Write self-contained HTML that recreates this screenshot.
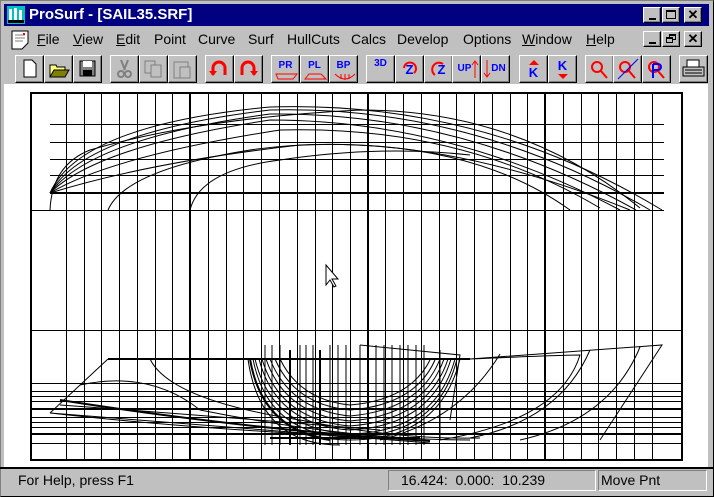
<!DOCTYPE html>
<html><head><meta charset="utf-8"><style>
*{margin:0;padding:0;box-sizing:border-box}
body{width:714px;height:497px;background:#c0c0c0;font-family:"Liberation Sans",sans-serif;overflow:hidden;position:relative}
.abs{position:absolute}
.title{left:4px;top:4px;width:705px;height:22px;background:#000080;color:#fff;font-weight:bold;font-size:15px;line-height:22px;padding-left:25px}
.btn{position:absolute;background:#c0c0c0;border-top:1px solid #fff;border-left:1px solid #fff;border-right:1px solid #000;border-bottom:1px solid #000;box-shadow:inset -1px -1px 0 #808080}
.menu{top:31px;font-size:14px;color:#000}
.tb{top:55px;width:29px;height:28px}
.tb span{position:absolute;left:0;right:0;top:4px;text-align:center;font-size:10px;font-weight:bold}
.status{font-size:14px}
.sunk{border-top:1px solid #808080;border-left:1px solid #808080;border-right:1px solid #fff;border-bottom:1px solid #fff}
</style></head><body>
<div class="abs" style="left:0;top:0;width:714px;height:497px;border:1px solid #808080;border-right-color:#000;border-bottom-color:#000"></div>
<div class="abs title">ProSurf - [SAIL35.SRF]</div>
<svg class="abs" style="left:7px;top:6px" width="18" height="18"><rect width="18" height="18" fill="#00c0c0"/><rect x="2" y="3" width="3" height="11" fill="#fff"/><rect x="7" y="2" width="3" height="12" fill="#fff"/><rect x="12" y="4" width="3" height="10" fill="#fff"/><rect x="1" y="14" width="16" height="3" fill="#000"/></svg>
<div class="btn" style="left:643px;top:7px;width:18px;height:16px"><div class="abs" style="left:5px;top:10px;width:7px;height:2px;background:#000"></div></div>
<div class="btn" style="left:662px;top:7px;width:18px;height:16px"><div class="abs" style="left:3px;top:2px;width:10px;height:9px;border:1px solid #000;border-top-width:2px"></div></div>
<div class="btn" style="left:684px;top:7px;width:18px;height:16px;font-size:13px;font-weight:bold;text-align:center;line-height:13px">✕</div>
<svg class="abs" style="left:10px;top:29px" width="22" height="22"><path d="M2 2h16v12l-6 6H2z" fill="#fff" stroke="#000"/><path d="M5 6h10M5 9h10M5 12h8" stroke="#808080"/><rect x="13" y="4" width="2" height="2" fill="red"/></svg>
<div class="abs menu" style="left:37px"><u>F</u>ile</div>
<div class="abs menu" style="left:73px"><u>V</u>iew</div>
<div class="abs menu" style="left:116px"><u>E</u>dit</div>
<div class="abs menu" style="left:154px">Point</div>
<div class="abs menu" style="left:198px">Curve</div>
<div class="abs menu" style="left:248px">Surf</div>
<div class="abs menu" style="left:287px">HullCuts</div>
<div class="abs menu" style="left:351px">Calcs</div>
<div class="abs menu" style="left:397px">Develop</div>
<div class="abs menu" style="left:463px">Options</div>
<div class="abs menu" style="left:522px"><u>W</u>indow</div>
<div class="abs menu" style="left:586px"><u>H</u>elp</div>
<div class="btn" style="left:643px;top:31px;width:18px;height:16px"><div class="abs" style="left:5px;top:10px;width:7px;height:2px;background:#000"></div></div>
<div class="btn" style="left:662px;top:31px;width:18px;height:16px"><div class="abs" style="left:6px;top:2px;width:7px;height:6px;border:1px solid #000;border-top-width:2px"></div><div class="abs" style="left:3px;top:5px;width:7px;height:6px;border:1px solid #000;border-top-width:2px;background:#c0c0c0"></div></div>
<div class="btn" style="left:684px;top:31px;width:18px;height:16px;font-size:13px;font-weight:bold;text-align:center;line-height:13px">✕</div>

<div class="btn tb" style="left:15px"><svg width="27" height="26"><path d="M8 4h8l4 4v13H8z" fill="#fff" stroke="#000"/></svg></div>
<div class="btn tb" style="left:44px"><svg width="27" height="26"><path d="M5 9h6l1 2h8v10H5z" fill="#ffff80" stroke="#000"/><path d="M5 21l4-7h15l-4 7z" fill="#808000" stroke="#000"/></svg></div>
<div class="btn tb" style="left:73px"><svg width="27" height="26"><rect x="6" y="5" width="15" height="15" fill="#808080" stroke="#000"/><rect x="9" y="5" width="9" height="6" fill="#fff"/><rect x="9" y="14" width="9" height="6" fill="#000"/></svg></div>
<div class="btn tb" style="left:110px"><svg width="27" height="26"><path d="M10 4l4 10M17 4l-4 10" stroke="#808080" stroke-width="2"/><circle cx="10" cy="18" r="3" fill="none" stroke="#808080" stroke-width="2"/><circle cx="17" cy="18" r="3" fill="none" stroke="#808080" stroke-width="2"/></svg></div>
<div class="btn tb" style="left:139px"><svg width="27" height="26"><rect x="5" y="5" width="10" height="12" fill="#c0c0c0" stroke="#808080"/><rect x="11" y="9" width="10" height="12" fill="#c0c0c0" stroke="#808080"/></svg></div>
<div class="btn tb" style="left:168px"><svg width="27" height="26"><rect x="5" y="6" width="14" height="16" fill="#c0c0c0" stroke="#808080"/><rect x="11" y="11" width="10" height="11" fill="#c0c0c0" stroke="#808080"/></svg></div>
<div class="btn tb" style="left:205px"><svg width="27" height="26"><path d="M7 19V12a6 6 0 0 1 12 0v7" fill="none" stroke="red" stroke-width="3"/><path d="M3 15l4 5 4-5z" fill="red"/></svg></div>
<div class="btn tb" style="left:234px"><svg width="27" height="26"><path d="M7 19V12a6 6 0 0 1 12 0v7" fill="none" stroke="red" stroke-width="3"/><path d="M15 15l4 5 4-5z" fill="red"/></svg></div>
<div class="btn tb" style="left:271px;color:#00f"><span>PR</span><svg class="abs" style="left:3px;top:17px" width="24" height="8"><path d="M1 1h21l-4 5H3z" fill="none" stroke="red"/></svg></div>
<div class="btn tb" style="left:300px;color:#00f"><span>PL</span><svg class="abs" style="left:3px;top:17px" width="24" height="8"><path d="M1 6l4-5h12l5 5z" fill="none" stroke="red"/></svg></div>
<div class="btn tb" style="left:329px;color:#00f"><span>BP</span><svg class="abs" style="left:3px;top:17px" width="24" height="8"><path d="M2 1q10 10 20 0M8 1v5M12 1v6M16 1v5" fill="none" stroke="red"/></svg></div>
<div class="btn tb" style="left:366px;color:#00f"><span style="top:2px">3D</span></div>
<div class="btn tb" style="left:395px;color:#00f"><span style="font-size:13px;top:6px">Z</span><svg class="abs" style="left:0;top:0" width="27" height="26"><path d="M8 12a6 6 0 1 1 10 5" fill="none" stroke="red" stroke-width="2"/></svg></div>
<div class="btn tb" style="left:424px;color:#00f"><span style="font-size:13px;top:6px;left:6px">Z</span><svg class="abs" style="left:0;top:0" width="27" height="26"><path d="M18 8a6 6 0 1 0 -8 11" fill="none" stroke="red" stroke-width="2"/></svg></div>
<div class="btn tb" style="left:452px;color:#00f"><span style="top:7px;left:-4px">UP</span><svg class="abs" style="left:0;top:0" width="27" height="26"><path d="M22 22V5M19 9l3-4 3 4" fill="none" stroke="red"/></svg></div>
<div class="btn tb" style="left:481px;color:#00f"><span style="top:7px;left:6px">DN</span><svg class="abs" style="left:0;top:0" width="27" height="26"><path d="M5 4v17M2 17l3 4 3-4" fill="none" stroke="red"/></svg></div>
<div class="btn tb" style="left:519px;color:#00f"><span style="top:9px;font-size:13px">K</span><svg class="abs" width="27" height="26"><path d="M9 9l5-5 5 5z" fill="red"/></svg></div>
<div class="btn tb" style="left:548px;color:#00f"><span style="top:2px;font-size:13px">K</span><svg class="abs" width="27" height="26"><path d="M9 18l5 5 5-5z" fill="red"/></svg></div>
<div class="btn tb" style="left:585px"><svg width="27" height="26"><circle cx="11" cy="11" r="5" fill="none" stroke="red" stroke-width="2"/><path d="M15 15l6 7" stroke="red" stroke-width="2"/></svg></div>
<div class="btn tb" style="left:613px"><svg width="27" height="26"><circle cx="11" cy="11" r="5" fill="none" stroke="red" stroke-width="2"/><path d="M15 15l6 7" stroke="red" stroke-width="2"/><path d="M4 23L24 3" stroke="#00f"/></svg></div>
<div class="btn tb" style="left:642px"><svg width="27" height="26"><circle cx="11" cy="11" r="5" fill="none" stroke="red" stroke-width="2"/><path d="M15 15l6 7" stroke="red" stroke-width="2"/><path d="M10 8v14M10 8h5a3 3 0 0 1 0 6h-5" fill="none" stroke="#00f" stroke-width="2"/></svg></div>
<div class="btn tb" style="left:679px"><svg width="27" height="26"><rect x="7" y="4" width="12" height="7" fill="#fff" stroke="#000"/><rect x="3" y="11" width="21" height="9" fill="#c0c0c0" stroke="#000"/><path d="M5 14h17M5 17h17" stroke="#000"/></svg></div>

<div class="abs" style="left:4px;top:84px;width:704px;height:384px;background:#fff"></div>
<svg class="abs" style="left:0;top:0" width="714" height="497" shape-rendering="crispEdges">
<g stroke="#000" stroke-width="1" fill="none">
<path d="M66.5 93V460M84.5 93V460M101.5 93V460M119.5 93V460M137.5 93V460M155.5 93V460M172.5 93V460M208.5 93V460M226.5 93V460M243.5 93V460M261.5 93V460M279.5 93V460M297.5 93V460M315.5 93V460M332.5 93V460M350.5 93V460M385.5 93V460M403.5 93V460M421.5 93V460M439.5 93V460M456.5 93V460M474.5 93V460M492.5 93V460M510.5 93V460M527.5 93V460M563.5 93V460M581.5 93V460M598.5 93V460M616.5 93V460M634.5 93V460M652.5 93V460"/>
<path d="M50 124.5H664M50 142.5H664M50 159.5H664M50 175.5H664M31 210.5H664M31 330.5H682M31 383.5H682M31 391.5H682M31 396.5H682M31 401.5H682M31 417.5H682M31 422.5H682M31 427.5H682M31 443.5H682"/>
</g>
<g stroke="#000" stroke-width="2" fill="none">
<path d="M190 93V460M368 93V460M545 93V460"/>
<rect x="31" y="93" width="651" height="367"/>
<path d="M50 193H664M31 409H682M31 434H682M108 359H470"/>
</g>
</svg>
<svg class="abs" style="left:0;top:0" width="714" height="497">
<g stroke="#000" stroke-width="1" fill="none">
<path d="M50 193Q80 125 270 107Q480 100 662 210"/>
<path d="M50 193Q85 132 270 110Q470 105 650 210"/>
<path d="M50 193Q92 138 270 114Q460 112 636 210"/>
<path d="M50 193Q98 146 270 120Q450 120 620 210"/>
<path d="M50 193Q112 156 280 130Q460 125 600 208"/>
<path d="M50 193Q150 162 300 145Q470 138 570 210"/>
<path d="M50 210Q52 165 90 150Q200 118 360 110Q520 110 640 208"/>
<path d="M108 210Q125 170 250 150Q420 125 630 210"/>
<path d="M190 210Q200 170 280 160Q380 145 470 155"/>
<path d="M50 413L108 359M50 413L430 443M50 413Q200 430 420 440M60 405Q200 415 380 430M80 385Q150 370 200 410Q350 440 470 440M150 359Q170 400 300 420Q400 440 480 438"/>
<path d="M470 359L662 345L600 440M470 359Q560 355 580 355Q560 420 440 440M500 354Q460 420 380 440M590 350Q560 420 470 438M640 347Q610 420 520 440"/>
<path d="M250 359Q265 440 350 440Q440 440 460 359M253 359Q268 436 350 437Q438 436 457 359M255 359Q272 430 350 434Q435 432 455 359M259 359Q276 425 350 430Q431 426 451 359M262 359Q280 420 350 426Q428 420 448 359M266 359Q285 415 350 421Q424 415 444 359M270 359Q290 410 350 416Q420 410 440 359M275 359Q295 405 350 410Q415 405 435 360M280 359Q300 400 350 405Q410 400 430 360M248 359Q260 445 340 445M360 345L460 355L450 420"/>
<path d="M265 345V445M272 345V445M280 345V445M300 345V445M306 345V445M313 345V445M330 345V445M338 345V445M346 345V445M360 345V445M376 345V445M384 345V445M392 345V445M400 345V445M408 345V445M416 345V445M424 345V445M440 350V440"/>
</g>
<g stroke="#000" stroke-width="2" fill="none">
<path d="M60 400Q250 430 430 441M250 359Q262 430 330 440M270 438H420"/>
<path d="M290 350V445M320 350V445"/>
</g>
<path d="M326 265v20l4-5 4 7 2-1-4-7h6z" fill="#fff" stroke="#000"/>
</svg>
<div class="abs" style="left:0;top:467px;width:714px;height:2px;background:#000"></div>
<div class="abs status" style="left:18px;top:472px">For Help, press F1</div>
<div class="abs sunk status" style="left:388px;top:470px;width:208px;height:21px;padding-left:12px;line-height:19px">16.424:&nbsp; 0.000:&nbsp; 10.239</div>
<div class="abs sunk status" style="left:598px;top:470px;width:109px;height:21px;padding-left:2px;line-height:19px">Move Pnt</div>
</body></html>
